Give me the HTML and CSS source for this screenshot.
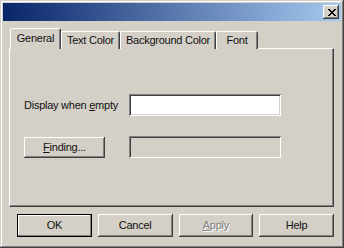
FILE: index.html
```html
<!DOCTYPE html>
<html>
<head>
<meta charset="utf-8">
<link rel="stylesheet" href="styles.css">
</head>
<body>
<div class="window">
  <div class="titlebar">
    <div class="close">
      <svg width="8" height="7" viewBox="0 0 8 7" shape-rendering="crispEdges">
        <path fill="#000" d="M0 0h2v1h-2zM6 0h2v1h-2zM1 1h2v1h-2zM5 1h2v1h-2zM2 2h4v1h-4zM3 3h2v1h-2zM2 4h4v1h-4zM1 5h2v1h-2zM5 5h2v1h-2zM0 6h2v1h-2zM6 6h2v1h-2z"/>
      </svg>
    </div>
  </div>
  <div class="content">
    <div class="tabs">
      <div class="tab selected" style="width:51px">General</div>
      <div class="tab" style="width:59px">Text Color</div>
      <div class="tab" style="width:96px">Background Color</div>
      <div class="tab" style="width:42px">Font</div>
    </div>
    <div class="panel">
      <div class="row">
        <div class="label">Display when <u>e</u>mpty</div>
        <div class="edit"></div>
      </div>
      <div class="row row2">
        <div class="btn finding"><span><u>F</u>inding...</span></div>
        <div class="edit disabled"></div>
      </div>
    </div>
    <div class="buttons">
      <div class="btn default"><span>OK</span></div>
      <div class="btn"><span>Cancel</span></div>
      <div class="btn off"><span><u>A</u>pply</span></div>
      <div class="btn"><span>Help</span></div>
    </div>
  </div>
</div>
</body>
</html>
```
FILE: styles.css
```css
* { box-sizing: border-box; }
html, body { margin: 0; padding: 0; background: #d4d0c8; }
body {
  font-family: "Liberation Sans", Arial, sans-serif;
  font-size: 11px;
  letter-spacing: -0.25px;
  color: #111;
}
.window {
  width: 344px;
  height: 248px;
  padding: 3px;
  background: #d4d0c8;
  box-shadow: inset -1px -1px #404040, inset 1px 1px #d4d0c8,
              inset -2px -2px #808080, inset 2px 2px #fff;
  display: flex;
  flex-direction: column;
}
.titlebar {
  height: 18px;
  flex: none;
  background: linear-gradient(to right, #0a246a, #a6caf0);
  display: flex;
  justify-content: flex-end;
  align-items: center;
  padding-right: 2px;
}
.close {
  width: 16px;
  height: 14px;
  background: #d4d0c8;
  box-shadow: inset -1px -1px #404040, inset 1px 1px #fff, inset -2px -2px #808080;
  display: flex;
  align-items: center;
  justify-content: center;
  padding-left: 1px;
}
.close svg { display: block; }
.content {
  padding: 8px 7px 0 6px;
  flex: 1;
  display: flex;
  flex-direction: column;
}
.tabs {
  height: 20px;
  display: flex;
  align-items: flex-end;
  padding-left: 1px;
  position: relative;
  z-index: 1;
  margin-bottom: -1px;
}
.tab {
  height: 18px;
  border-top: 1px solid #fff;
  border-left: 1px solid #fff;
  border-right: 1px solid #404040;
  box-shadow: inset -1px 0 #808080;
  border-top-left-radius: 2px;
  border-top-right-radius: 2px;
  background: #d4d0c8;
  text-align: center;
  line-height: 15px;
  white-space: nowrap;
  padding-top: 1px;
}
.tab.selected {
  height: 21px;
  line-height: 16px;
  padding-top: 1px;
}
.panel {
  height: 159px;
  border-top: 1px solid #fff;
  border-left: 1px solid #fff;
  border-right: 1px solid #404040;
  border-bottom: 1px solid #404040;
  box-shadow: inset -1px -1px #808080;
  padding: 45px 0 0 14px;
}
.row {
  display: flex;
  align-items: center;
  height: 22px;
}
.row2 { margin-top: 20px; }
.label { width: 105px; padding-bottom: 1px; }
.edit {
  width: 152px;
  height: 22px;
  background: #fff;
  box-shadow: inset 1px 1px #808080, inset -1px -1px #fff,
              inset 2px 2px #404040, inset -2px -2px #d4d0c8;
}
.edit.disabled { background: #d4d0c8; }
.btn {
  width: 75px;
  height: 23px;
  background: #d4d0c8;
  box-shadow: inset -1px -1px #404040, inset 1px 1px #fff, inset -2px -2px #808080;
  display: flex;
  align-items: center;
  justify-content: center;
  padding-bottom: 1px;
}
.btn.finding { width: 81px; height: 21px; margin-right: 24px; }
.btn.default {
  border: 1px solid #000;
  box-shadow: inset -1px -1px #808080, inset 1px 1px #fff;
}
.btn.off span { color: #808080; text-shadow: 1px 1px #fff; }
.buttons {
  margin-top: 7px;
  display: flex;
  gap: 6px;
  padding-left: 8px;
}
```
